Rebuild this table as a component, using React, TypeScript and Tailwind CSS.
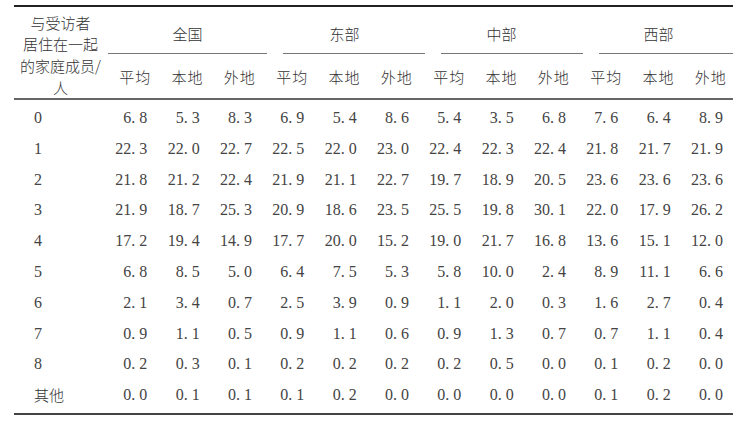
import React from "react";

const groups = ["全国", "东部", "中部", "西部"];
const underline = [
  "ml-[3px] mr-[-5px]",
  "ml-[21px] mr-[-6px]",
  "ml-[22px] mr-[-7px]",
  "ml-[23px] mr-0",
];
const subs = ["平均", "本地", "外地"];

const rows: [string, string[]][] = [
  ["0", ["6.8", "5.3", "8.3", "6.9", "5.4", "8.6", "5.4", "3.5", "6.8", "7.6", "6.4", "8.9"]],
  ["1", ["22.3", "22.0", "22.7", "22.5", "22.0", "23.0", "22.4", "22.3", "22.4", "21.8", "21.7", "21.9"]],
  ["2", ["21.8", "21.2", "22.4", "21.9", "21.1", "22.7", "19.7", "18.9", "20.5", "23.6", "23.6", "23.6"]],
  ["3", ["21.9", "18.7", "25.3", "20.9", "18.6", "23.5", "25.5", "19.8", "30.1", "22.0", "17.9", "26.2"]],
  ["4", ["17.2", "19.4", "14.9", "17.7", "20.0", "15.2", "19.0", "21.7", "16.8", "13.6", "15.1", "12.0"]],
  ["5", ["6.8", "8.5", "5.0", "6.4", "7.5", "5.3", "5.8", "10.0", "2.4", "8.9", "11.1", "6.6"]],
  ["6", ["2.1", "3.4", "0.7", "2.5", "3.9", "0.9", "1.1", "2.0", "0.3", "1.6", "2.7", "0.4"]],
  ["7", ["0.9", "1.1", "0.5", "0.9", "1.1", "0.6", "0.9", "1.3", "0.7", "0.7", "1.1", "0.4"]],
  ["8", ["0.2", "0.3", "0.1", "0.2", "0.2", "0.2", "0.2", "0.5", "0.0", "0.1", "0.2", "0.0"]],
  ["其他", ["0.0", "0.1", "0.1", "0.1", "0.2", "0.0", "0.0", "0.0", "0.0", "0.1", "0.2", "0.0"]],
];

const cjk = "font-['Noto_Sans_CJK_SC',sans-serif] font-light text-[15px] text-[#333]";
const num = "font-['Liberation_Serif','Noto_Sans_CJK_SC',serif] text-[16px] text-[#444]";

function Num({ v }: { v: string }) {
  const [a, b] = v.split(".");
  return (
    <span>
      {a}
      <span className="inline-block w-[8px] text-left">.</span>
      {b}
    </span>
  );
}

export default function App() {
  return (
    <div className="w-[746px] h-[427px] bg-white pt-[5px] pl-[14px]">
      <div className="w-[719px] border-t-2 border-[#222]">
        <div className="grid grid-cols-[91px_repeat(12,minmax(0,1fr))] border-b-2 border-[#666]">
          <div className={`row-span-2 pt-[4.6px] pl-[2px] text-center leading-[21.7px] ${cjk}`}>
            <div>与受访者</div>
            <div>居住在一起</div>
            <div>的家庭成员/</div>
            <div>人</div>
          </div>
          {groups.map((g, i) => (
            <div key={g} className="col-span-3 flex flex-col">
              <div className={`h-[46px] pt-[17px] pl-[8px] text-center leading-[20px] ${cjk}`}>{g}</div>
              <div className={`h-px bg-[#777] ${underline[i]}`} />
            </div>
          ))}
          {groups.map((g) =>
            subs.map((s) => (
              <div key={g + s} className={`h-[44px] pt-[13px] pl-[8px] text-center leading-[20px] tracking-[1px] ${cjk}`}>
                {s}
              </div>
            ))
          )}
        </div>
        <div className="pt-[2.6px] pb-[2.4px] border-b-2 border-[#444]">
          {rows.map(([label, vals]) => (
            <div
              key={label}
              className="grid grid-cols-[91px_repeat(12,minmax(0,1fr))] h-[30.8px] leading-[30.8px]"
            >
              <div className={`pl-[20px] ${label === "其他" ? cjk : num}`}>{label}</div>
              {vals.map((v, j) => (
                <div key={j} className={`text-right pr-[10px] ${num}`}>
                  <Num v={v} />
                </div>
              ))}
            </div>
          ))}
        </div>
      </div>
    </div>
  );
}
